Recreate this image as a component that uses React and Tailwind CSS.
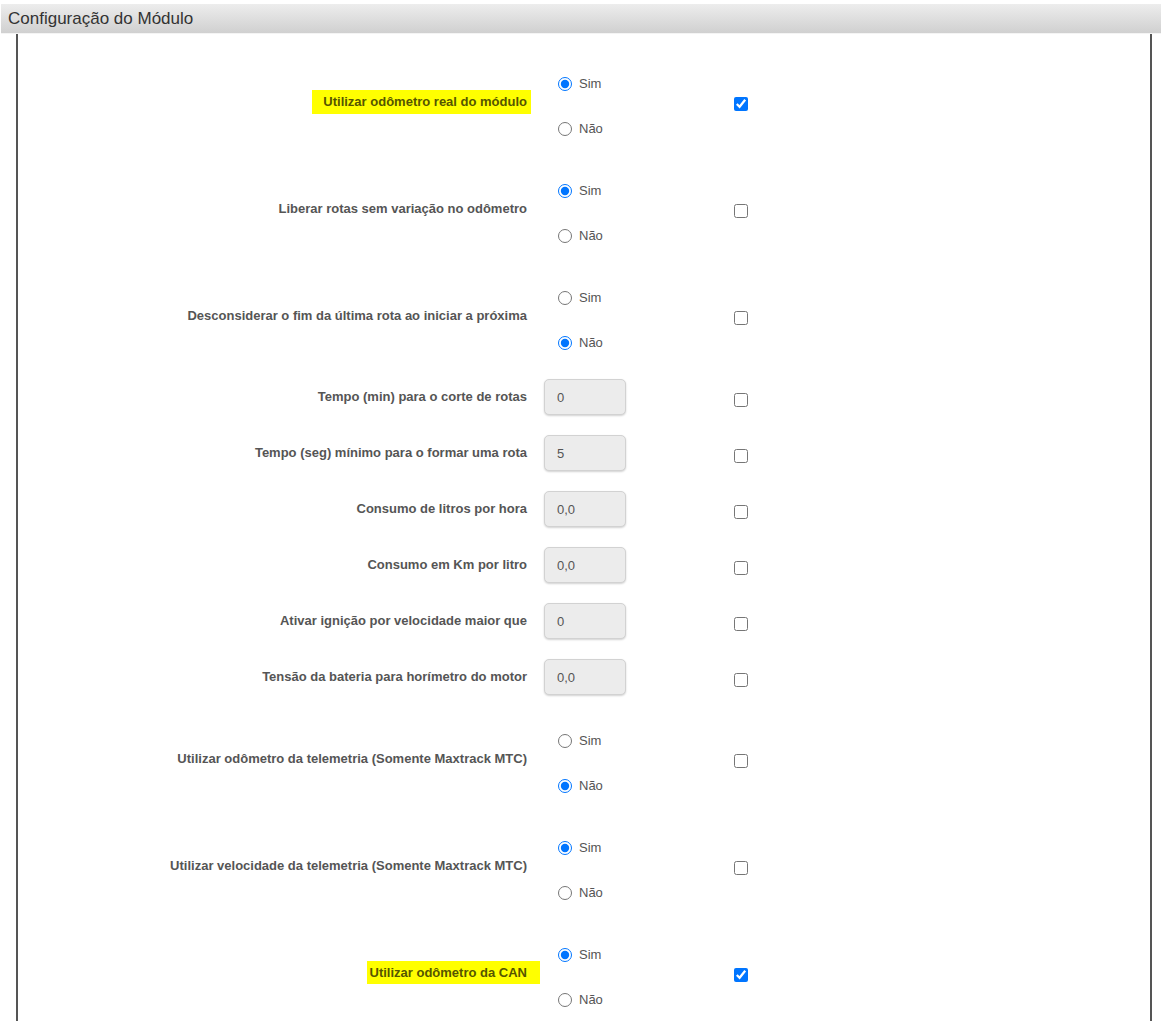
import React from 'react';

// Configuração do módulo: each row is label | control | "apply" checkbox
const rows = [
  { label: 'Utilizar odômetro real do módulo', type: 'radio', value: 'sim', checked: true, mark: 'a' },
  { label: 'Liberar rotas sem variação no odômetro', type: 'radio', value: 'sim', checked: false },
  { label: 'Desconsiderar o fim da última rota ao iniciar a próxima', type: 'radio', value: 'nao', checked: false },
  { label: 'Tempo (min) para o corte de rotas', type: 'text', value: '0', checked: false },
  { label: 'Tempo (seg) mínimo para o formar uma rota', type: 'text', value: '5', checked: false },
  { label: 'Consumo de litros por hora', type: 'text', value: '0,0', checked: false },
  { label: 'Consumo em Km por litro', type: 'text', value: '0,0', checked: false },
  { label: 'Ativar ignição por velocidade maior que', type: 'text', value: '0', checked: false },
  { label: 'Tensão da bateria para horímetro do motor', type: 'text', value: '0,0', checked: false },
  { label: 'Utilizar odômetro da telemetria (Somente Maxtrack MTC)', type: 'radio', value: 'nao', checked: false },
  { label: 'Utilizar velocidade da telemetria (Somente Maxtrack MTC)', type: 'radio', value: 'sim', checked: false },
  { label: 'Utilizar odômetro da CAN', type: 'radio', value: 'sim', checked: true, mark: 'b' },
];

const Label = ({ row }) => {
  if (row.mark === 'a') {
    return (
      <span className="inline-block bg-[#ffff00] leading-[24px] pl-[11px] pr-[4px] mr-[-4px] text-[#555500]">
        {row.label}
      </span>
    );
  }
  if (row.mark === 'b') {
    return (
      <span className="inline-block bg-[#ffff00] leading-[23px] pl-[3px] pr-[13px] mr-[-13px] text-[#555500]">
        {row.label}
      </span>
    );
  }
  return <span>{row.label}</span>;
};

const RadioGroup = ({ name, value }) => (
  <div className="flex flex-col gap-[27px] pl-[14px] mt-[9px]">
    <label className="flex items-center h-[18px]">
      <input type="radio" name={name} defaultChecked={value === 'sim'} className="m-0 w-[14px] h-[14px]" />
      <span className="ml-[7px]">Sim</span>
    </label>
    <label className="flex items-center h-[18px]">
      <input type="radio" name={name} defaultChecked={value === 'nao'} className="m-0 w-[14px] h-[14px]" />
      <span className="ml-[7px]">Não</span>
    </label>
  </div>
);

export default function App() {
  return (
    <div className="min-h-screen bg-white pt-[4px] pl-[1px] font-['Liberation_Sans',Arial,sans-serif] text-[#555]">
      {/* Cabeçalho */}
      <div className="h-[30px] flex items-center pl-[7px] bg-gradient-to-b from-[#ededed] to-[#d0d0d0] border-b border-[#f4f4f4] text-[17px] text-[#333]">
        Configuração do Módulo
      </div>

      {/* Painel */}
      <div className="ml-[15px] w-[1136px] border-x-2 border-[#555] pt-[14px] pb-[20px]">
        {rows.map((row, i) => (
          <div key={i} className={`flex items-center ${row.type === 'radio' ? 'h-[107px]' : 'h-[56px]'}`}>
            <div className="w-[509px] text-right text-[13px] font-bold">
              <Label row={row} />
            </div>
            <div className="w-[190px] ml-[17px] text-[13px]">
              {row.type === 'radio' ? (
                <RadioGroup name={`r${i}`} value={row.value} />
              ) : (
                <input
                  type="text"
                  defaultValue={row.value}
                  readOnly
                  className="w-[82px] h-[36px] rounded-[5px] border border-[#d2d2d2] bg-[#ececec] shadow-[0_1px_2px_rgba(0,0,0,0.18)] pl-[12px] text-[13px] text-[#555] outline-none"
                />
              )}
            </div>
            <div className="mt-[5px]">
              <input type="checkbox" defaultChecked={row.checked} className="m-0 w-[14px] h-[14px] block" />
            </div>
          </div>
        ))}
      </div>
    </div>
  );
}
